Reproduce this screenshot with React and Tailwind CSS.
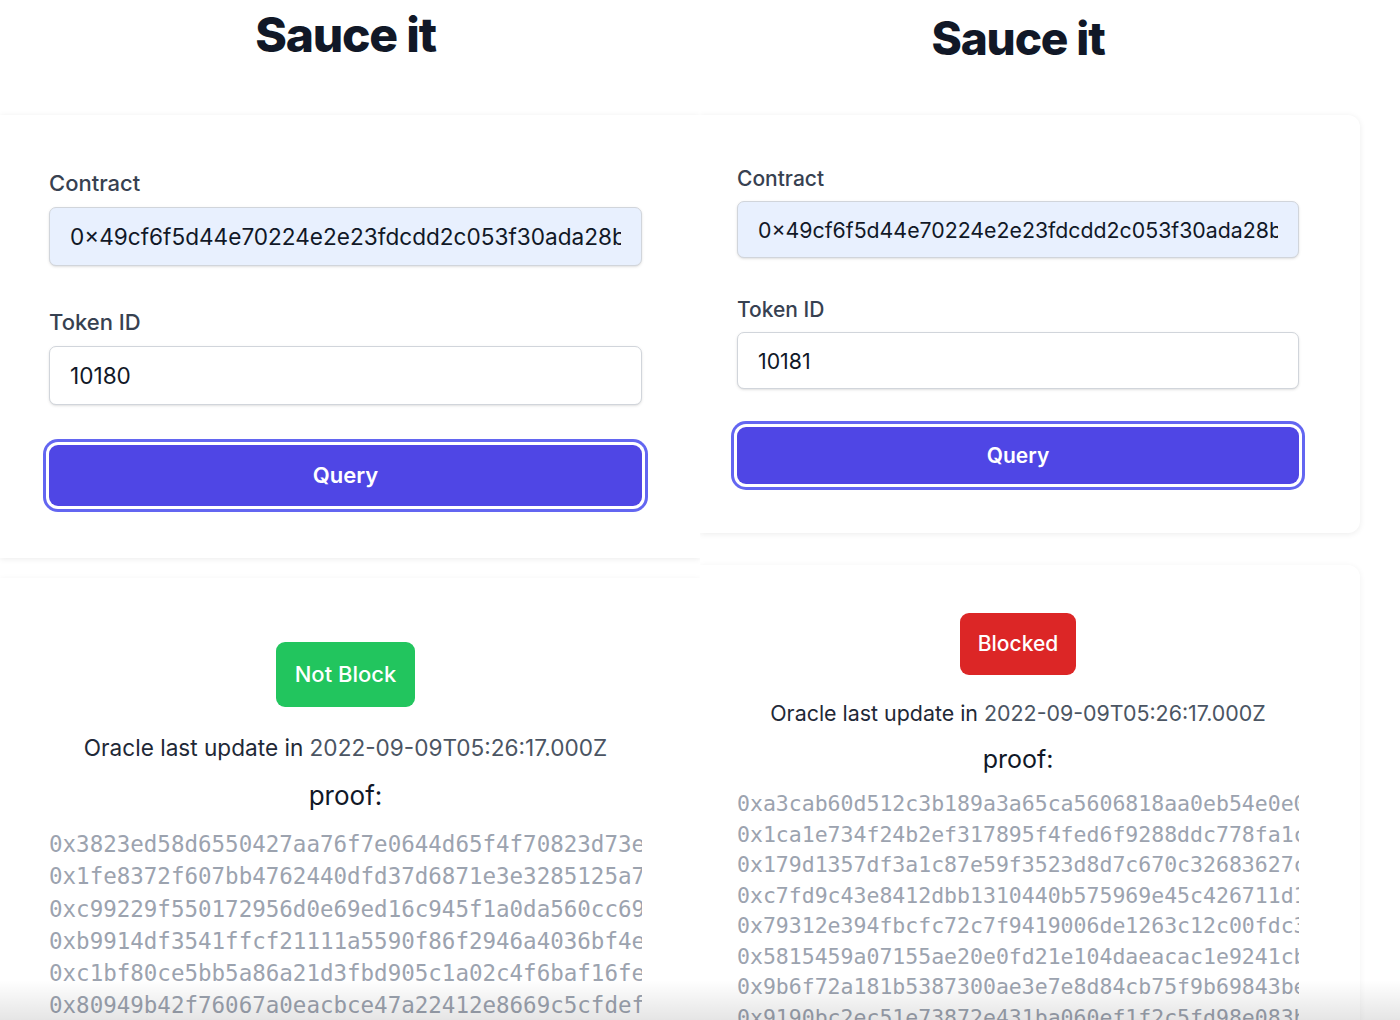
import React from "react";

const hashesL = [
  "0x3823ed58d6550427aa76f7e0644d65f4f70823d73e91b2a4c07d5e6f8a1b2c3d4e",
  "0x1fe8372f607bb4762440dfd37d6871e3e3285125a7c4d8e2f1a09b3c6d7e8f90a1",
  "0xc99229f550172956d0e69ed16c945f1a0da560cc69e2b7f4a81c3d5e6f708192a3",
  "0xb9914df3541ffcf21111a5590f86f2946a4036bf4e7a1c2d3b4e5f60718293a4b5",
  "0xc1bf80ce5bb5a86a21d3fbd905c1a02c4f6baf16fe0d9c8b7a6f5e4d3c2b1a0987",
  "0x80949b42f76067a0eacbce47a22412e8669c5cfdef3a2b1c0d9e8f7a6b5c4d3e2f",
  "0x4e2a9b17c3d5f6081a2b3c4d5e6f708192a3b4c5d6e7f8091a2b3c4d5e6f7a8b9c",
];

const hashesR = [
  "0xa3cab60d512c3b189a3a65ca5606818aa0eb54e0e0f1a2b3c4d5e6f7081920a1b2",
  "0x1ca1e734f24b2ef317895f4fed6f9288ddc778fa1c2d3e4f5a6b7c8d9e0f1a2b3c",
  "0x179d1357df3a1c87e59f3523d8d7c670c32683627c8b9a0f1e2d3c4b5a69788796",
  "0xc7fd9c43e8412dbb1310440b575969e45c426711d1a2b3c4d5e6f708192a3b4c5d",
  "0x79312e394fbcfc72c7f9419006de1263c12c00fdc3e4f5a6b7c8d9e0f1a2b3c4d5",
  "0x5815459a07155ae20e0fd21e104daeacac1e9241cb5a6b7c8d9e0f1a2b3c4d5e6f",
  "0x9b6f72a181b5387300ae3e7e8d84cb75f9b69843be6f7a8b9c0d1e2f3a4b5c6d7e",
  "0x9190bc2ec51e73872e431ba060ef1f2c5fd98e083b7c8d9e0f1a2b3c4d5e6f7a8b",
];

const CONTRACT = "0\u00d749cf6f5d44e70224e2e23fdcdd2c053f30ada28b6f3c2a1d";

function LeftPanel() {
  return (
    <div className="w-[700px] shrink-0 h-full overflow-hidden">
      <div className="h-[115px] pt-[11px] pl-[49px] pr-[58px] text-center">
        <h1 className="text-[48px] leading-[48px] font-extrabold tracking-tight text-[#111827]">
          Sauce it
        </h1>
      </div>
      <div className="bg-white shadow-[0_1px_6px_rgba(0,0,0,0.08)] h-[443px] pl-[49px] pr-[58px] pt-[54px]">
        <div className="text-[22px] leading-[28px] font-medium text-[#374151]">Contract</div>
        <input
          readOnly
          value={CONTRACT}
          className="mt-[10px] block w-full h-[59px] px-[20px] rounded-[7px] border border-[#d1d5db] bg-[#e8f0fe] text-[22.6px] text-[#111827] outline-none shadow-sm"
        />
        <div className="mt-[42px] text-[22px] leading-[28px] font-medium text-[#374151]">Token ID</div>
        <input
          readOnly
          value="10180"
          className="mt-[10px] block w-full h-[59px] px-[20px] rounded-[7px] border border-[#d1d5db] bg-white text-[22.6px] text-[#111827] outline-none shadow-sm"
        />
        <button className="mt-[40px] w-full h-[61px] rounded-[9px] bg-[#4f46e5] text-white text-[22px] font-semibold ring-[3px] ring-[#6366f1] ring-offset-[3px] ring-offset-white">
          Query
        </button>
      </div>
      <div className="mt-[20px] bg-white shadow-[0_1px_6px_rgba(0,0,0,0.06)] pl-[49px] pr-[58px] pt-[64px] flex flex-col items-center">
        <div className="h-[65px] px-[19px] rounded-[9px] bg-[#22c55e] text-white text-[22px] font-medium flex items-center">
          Not Block
        </div>
        <div className="mt-[26px] text-[22.6px] leading-[30px] text-[#1f2937] whitespace-nowrap">
          Oracle last update in <span className="text-[#4b5563]">2022-09-09T05:26:17.000Z</span>
        </div>
        <div className="mt-[16px] text-[26px] leading-[34px] text-[#111827]">proof:</div>
        <div className="mt-[15px] self-stretch font-['DejaVu_Sans_Mono',monospace] text-[22.5px] leading-[32.3px] text-[#9ca3af]">
          {hashesL.map((h) => (
            <div key={h} className="whitespace-nowrap overflow-hidden">{h}</div>
          ))}
        </div>
      </div>
    </div>
  );
}

function RightPanel() {
  return (
    <div className="w-[700px] shrink-0 h-full overflow-hidden">
      <div className="h-[115px] pt-[15px] pl-[37px] pr-[101px] text-center">
        <h1 className="text-[46px] leading-[46px] font-extrabold tracking-tight text-[#111827]">
          Sauce it
        </h1>
      </div>
      <div className="w-[660px] bg-white rounded-r-[12px] shadow-[0_1px_6px_rgba(0,0,0,0.08)] h-[418px] pl-[37px] pr-[61px] pt-[51px]">
        <div className="text-[21px] leading-[26px] font-medium text-[#374151]">Contract</div>
        <input
          readOnly
          value={CONTRACT}
          className="mt-[9px] block w-full h-[57px] px-[20px] rounded-[7px] border border-[#d1d5db] bg-[#e8f0fe] text-[21.3px] text-[#111827] outline-none shadow-sm"
        />
        <div className="mt-[39px] text-[21px] leading-[26px] font-medium text-[#374151]">Token ID</div>
        <input
          readOnly
          value="10181"
          className="mt-[9px] block w-full h-[57px] px-[20px] rounded-[7px] border border-[#d1d5db] bg-white text-[21.3px] text-[#111827] outline-none shadow-sm"
        />
        <button className="mt-[38px] w-full h-[57px] rounded-[9px] bg-[#4f46e5] text-white text-[21px] font-semibold ring-[3px] ring-[#6366f1] ring-offset-[3px] ring-offset-white">
          Query
        </button>
      </div>
      <div className="w-[660px] mt-[32px] bg-white rounded-r-[12px] shadow-[0_1px_6px_rgba(0,0,0,0.06)] pl-[37px] pr-[61px] pt-[48px] flex flex-col items-center">
        <div className="h-[62px] px-[18px] rounded-[9px] bg-[#dc2626] text-white text-[21px] font-medium flex items-center">
          Blocked
        </div>
        <div className="mt-[24px] text-[21.4px] leading-[28px] text-[#1f2937] whitespace-nowrap">
          Oracle last update in <span className="text-[#4b5563]">2022-09-09T05:26:17.000Z</span>
        </div>
        <div className="mt-[16px] text-[25px] leading-[32px] text-[#111827]">proof:</div>
        <div className="mt-[14px] self-stretch font-['DejaVu_Sans_Mono',monospace] text-[21.5px] leading-[30.5px] text-[#9ca3af]">
          {hashesR.map((h) => (
            <div key={h} className="whitespace-nowrap overflow-hidden">{h}</div>
          ))}
        </div>
      </div>
    </div>
  );
}

export default function App() {
  return (
    <div className="relative flex w-[1400px] h-[1020px] overflow-hidden bg-white font-['Inter',sans-serif]">
      <LeftPanel />
      <RightPanel />
      <div className="pointer-events-none absolute left-0 right-0 bottom-0 h-[40px] bg-gradient-to-b from-transparent to-[rgba(0,0,0,0.1)]" />
    </div>
  );
}
